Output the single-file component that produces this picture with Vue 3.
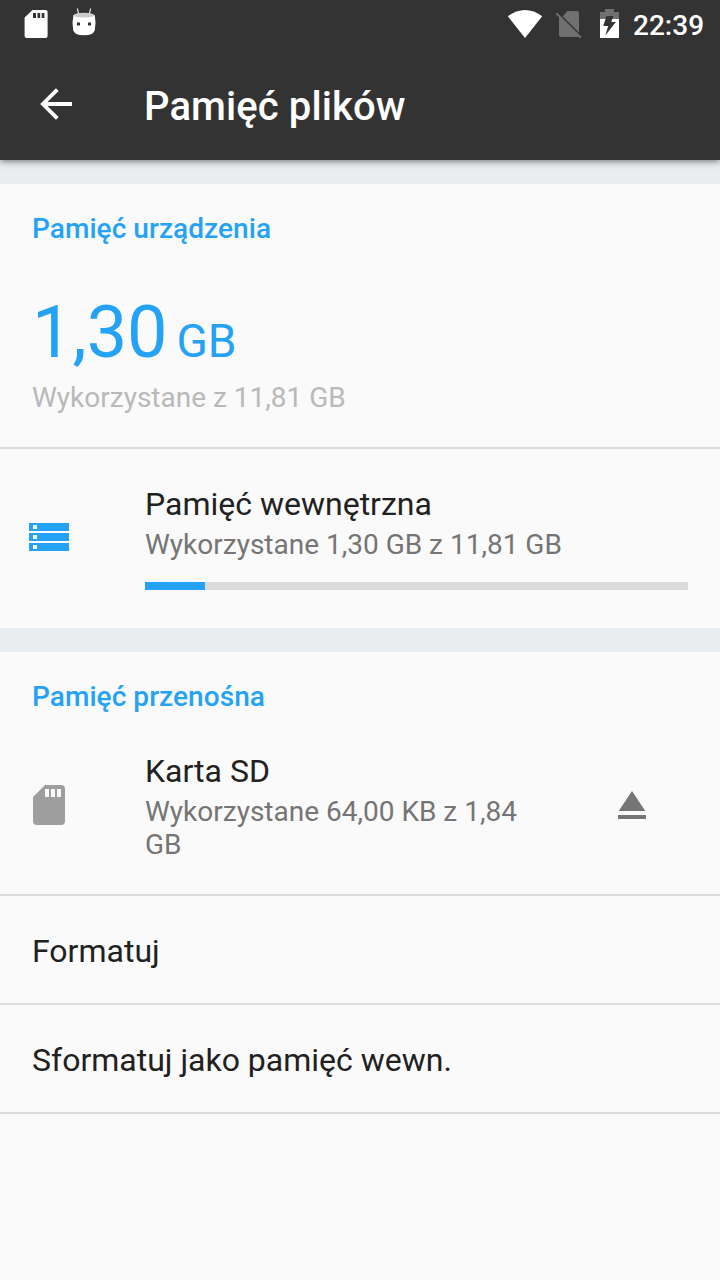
<script setup>
const actions = ['Formatuj', 'Sformatuj jako pamięć wewn.']
</script>

<template>
  <div class="screen">
    <header>
      <div class="status">
        <svg class="sicons" width="110" height="48" viewBox="0 0 110 48">
          <path fill="#fff" fill-rule="evenodd" d="M32.500 10H45.600a2 2 0 0 1 2 2V36a2 2 0 0 1-2 2H26.600a2 2 0 0 1-2-2V17.500ZM33 13v5h3v-5ZM37.500 13v5h2.700v-5ZM41.700 13v5h2.700v-5Z"/>
          <path fill="#fff" d="M73.400 15Q84 18.500 94.700 15Q96.300 23 94.800 30Q94 35.300 84 35.300T73.200 30Q71.800 23 73.400 15Z"/>
          <ellipse cx="84" cy="15.200" rx="10.300" ry="2.400" fill="#ccc"/>
          <path stroke="#e0e0e0" stroke-width="1.200" d="m77.300 8.500 1.400 5.500m12-5.500L89.300 14"/>
          <path fill="#333" d="M77 22.500h3v3h-3ZM88 22.500h3v3h-3Z"/>
        </svg>
        <svg class="ricons" width="125" height="48" viewBox="500 0 125 48">
          <path fill="#fff" d="M507.800 16.200Q525 3.800 542.200 16.200L525 38Z"/>
          <path fill="#707070" d="M567.500 11h9.500q2 0 2 2V32.800L562.800 16.500ZM559 15.500 579 35.500Q578.500 37 577 37H561q-2 0-2-2Z"/>
          <path stroke="#707070" stroke-width="2" d="m556.300 13.400 24.500 24.400"/>
          <path fill="#707070" d="M605 9h9v3h5v7h-19V12h5Z"/>
          <path fill="#fff" d="M600 19h19v19h-19Z"/>
          <path fill="#333" d="M606.500 16h7l-2.300 6h4.600l-10.500 13.500 2.900-9.500h-5Z"/>
        </svg>
        <span class="clock">22:39</span>
      </div>
      <div class="toolbar">
        <svg class="back" width="34" height="34" viewBox="0 0 34 34"><path d="M33 17H4M18.300 2.600 3.900 17l14.400 14.400" fill="none" stroke="#fff" stroke-width="3.800"/></svg>
        <h1>Pamięć plików</h1>
      </div>
    </header>
    <main>
      <section class="device">
        <h2>Pamięć urządzenia</h2>
        <div class="total"><span class="num">1,30</span> <span class="unit">GB</span></div>
        <div class="used">Wykorzystane z 11,81 GB</div>
      </section>
      <section class="row internal">
        <div class="lead">
          <svg width="72" height="39" viewBox="0 1 72 39"><path fill="#24a2f5" fill-rule="evenodd" d="M29 6h40v8H29ZM29 16h40v8H29ZM29 26h40v8H29ZM33 8v4h4V8ZM33 18v4h4v-4ZM33 28v4h4v-4Z"/></svg>
        </div>
        <div class="body">
          <div class="title">Pamięć wewnętrzna</div>
          <div class="sub">Wykorzystane 1,30 GB z 11,81 GB</div>
          <div class="bar"><div class="fill"></div></div>
        </div>
      </section>
      <section class="portable">
        <h2>Pamięć przenośna</h2>
        <div class="row card">
          <div class="lead">
            <svg width="72" height="44" viewBox="0 0 72 44"><path fill="#9e9e9e" fill-rule="evenodd" d="M45 2H61q4 0 4 4V38q0 4-4 4H37q-4 0-4-4V14ZM45 6v8h4V6ZM51 6v8h4V6ZM57 6v8h4V6Z"/></svg>
          </div>
          <div class="body">
            <div class="title">Karta SD</div>
            <div class="sub">Wykorzystane 64,00 KB z 1,84 GB</div>
          </div>
          <svg class="eject" width="28" height="28" viewBox="0 0 28 28"><path fill="#757575" d="M14 0 27.300 20H.7ZM0 24h28v4H0Z"/></svg>
        </div>
      </section>
      <div v-for="a in actions" :key="a" class="action">{{ a }}</div>
    </main>
  </div>
</template>

<style>
body { margin: 0; }
</style>
<style scoped>
.screen { width: 720px; height: 1280px; overflow: hidden; background: #fafafa; font-family: Roboto, sans-serif; color: #212121; }
header { position: relative; height: 160px; background: #333; color: #fff; box-shadow: 0 1px 7px rgba(0,0,0,.55); }
.status { height: 48px; display: flex; }
.ricons { margin-left: 390px; }
.clock { margin-left: 8px; font-size: 28px; line-height: 51px; font-weight: 500; }
.toolbar { height: 112px; display: flex; align-items: center; }
.back { margin-left: 39px; }
h1 { margin: 5px 0 0 71px; font-size: 40px; line-height: 48px; font-weight: 500; letter-spacing: .1px; }
main { border-top: 24px solid #e9edf0; }
h2 { margin: 0; padding: 28px 32px 0; font-size: 28px; line-height: 33px; font-weight: 500; color: #24a2f5; letter-spacing: .06px; }
.device { height: 263px; border-bottom: 2px solid #dcdcdc; }
.total { height: 83px; padding: 46px 32px 0; line-height: 84px; color: #24a2f5; white-space: nowrap; }
.num { font-size: 72px; }
.unit { margin-left: 5px; font-size: 46px; }
.used { padding: 7px 32px 0; font-size: 28px; line-height: 33px; color: #b9b9b9; }
.row { display: flex; align-items: center; }
.lead { width: 145px; display: flex; }
.internal { height: 177px; padding-bottom: 2px; border-bottom: 24px solid #e9edf0; }
.internal .body { width: 543px; }
.title { font-size: 32px; line-height: 38px; white-space: nowrap; }
.sub { font-size: 28px; line-height: 33px; color: #757575; margin-top: 5px; }
.bar { height: 8px; margin-top: 21px; background: #dbdbdb; }
.fill { width: 60px; height: 100%; background: #24a2f5; }
.portable { height: 242px; border-bottom: 2px solid #dcdcdc; }
.card { height: 178px; padding-top: 3px; }
.card .body { width: 397px; margin-top: 3px; }
.eject { margin-left: 76px; }
.action { height: 107px; padding: 0 32px; border-bottom: 2px solid #dcdcdc; font-size: 32px; line-height: 111px; }
</style>
